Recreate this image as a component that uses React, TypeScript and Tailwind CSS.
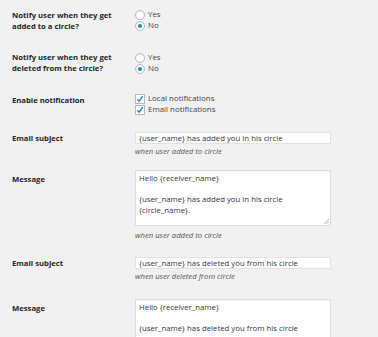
import React from 'react';

const font = { fontFamily: '"Open Sans", "Noto Sans", sans-serif' };

const Radio = ({ checked, label }: { checked?: boolean; label: string }) => (
    <div className="flex items-center h-[11px]">
        <span className="w-[10px] h-[10px] rounded-full border border-[#b4b9be] bg-white flex items-center justify-center shadow-[inset_0_1px_2px_rgba(0,0,0,0.07)]">
            {checked && <span className="w-[4px] h-[4px] rounded-full bg-[#1e8cbe]"></span>}
        </span>
        <span className="ml-[3px] text-[7.9px] text-[#444]">{label}</span>
    </div>
);

const Check = ({ label }: { label: string }) => (
    <div className="flex items-center h-[11px]">
        <span className="w-[10px] h-[10px] border border-[#b4b9be] bg-white flex items-center justify-center">
            <svg width="8" height="8" viewBox="0 0 8 8">
                <path d="M1.2 4.2 L3.2 6.2 L6.8 1.2" fill="none" stroke="#1e8cbe" strokeWidth="1.4" />
            </svg>
        </span>
        <span className="ml-[3px] text-[7.9px] text-[#444]">{label}</span>
    </div>
);

const Label = ({ children, className = '' }: { children: React.ReactNode; className?: string }) => (
    <div className={`w-[135px] shrink-0 pl-[12px] text-[7.7px] leading-[10.5px] font-bold text-[#23282d] ${className}`}>{children}</div>
);

const Hint = ({ children, className = '' }: { children: React.ReactNode; className?: string }) => (
    <div className={`text-[7.7px] leading-[11px] italic text-[#555] ${className}`}>{children}</div>
);

const Input = ({ value }: { value: string }) => (
    <div className="w-[196px] h-[12px] border border-[#e2e2e2] bg-white pl-[3px] text-[7.8px] leading-[10px] text-[#32373c] whitespace-nowrap overflow-hidden">
        {value}
    </div>
);

const TextArea = ({ lines }: { lines: string[] }) => (
    <div className="relative w-[196px] h-[56px] border border-[#ddd] bg-white px-[3px] pt-[2px] text-[7.8px] leading-[10.5px] text-[#32373c] overflow-hidden shadow-[inset_0_1px_2px_rgba(0,0,0,0.05)]">
        {lines.map((l, i) => (
            <div key={i} className="h-[10.5px] whitespace-nowrap">{l}</div>
        ))}
        <svg className="absolute right-[1px] bottom-[1px]" width="5" height="5" viewBox="0 0 5 5">
            <path d="M0 5 L5 0 M2.5 5 L5 2.5" stroke="#999" strokeWidth="0.7" />
        </svg>
    </div>
);

export default function App() {
    return (
        <div className="w-[378px] h-[337px] overflow-hidden bg-[#f1f1f1]" style={font}>
            {/* added to circle */}
            <div className="flex pt-[10px]">
                <Label>Notify user when they get<br />added to a circle?</Label>
                <div className="-mt-[1px]">
                    <Radio label="Yes" />
                    <Radio checked label="No" />
                </div>
            </div>

            {/* deleted from circle */}
            <div className="flex mt-[21px]">
                <Label>Notify user when they get<br />deleted from the circle?</Label>
                <div>
                    <Radio label="Yes" />
                    <Radio checked label="No" />
                </div>
            </div>

            {/* notifications */}
            <div className="flex mt-[19px]">
                <Label className="pt-[2px]">Enable notification</Label>
                <div>
                    <Check label="Local notifications" />
                    <Check label="Email notifications" />
                </div>
            </div>

            <div className="flex mt-[17px]">
                <Label className="pt-[1px]">Email subject</Label>
                <div>
                    <Input value="{user_name} has added you in his circle" />
                    <Hint className="mt-[2px]">when user added to circle</Hint>
                </div>
            </div>

            <div className="flex mt-[13px]">
                <Label className="pt-[4px]">Message</Label>
                <div>
                    <TextArea lines={['Hello {receiver_name}', '', '{user_name} has added you in his circle', '{circle_name}.']} />
                    <Hint className="mt-[4px]">when user added to circle</Hint>
                </div>
            </div>

            <div className="flex mt-[16px]">
                <Label className="pt-[1px]">Email subject</Label>
                <div>
                    <Input value="{user_name} has deleted you from his circle" />
                    <Hint className="mt-[2px]">when user deleted from circle</Hint>
                </div>
            </div>

            <div className="flex mt-[17px]">
                <Label className="pt-[4px]">Message</Label>
                <div>
                    <TextArea lines={['Hello {receiver_name}', '', '{user_name} has deleted you from his circle', '{circle_name}.']} />
                </div>
            </div>
        </div>
    );
}
